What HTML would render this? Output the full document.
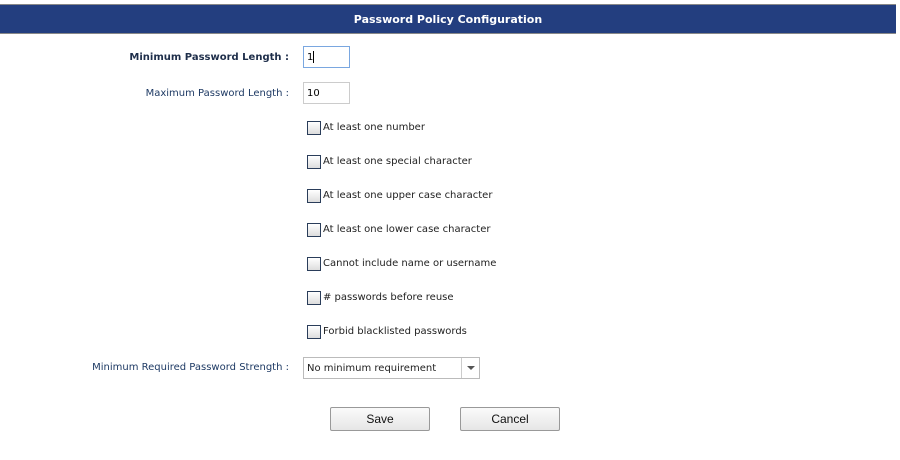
<!DOCTYPE html>
<html><head><style>
body{margin:0;width:900px;height:460px;background:#fff;font-family:"DejaVu Sans","Liberation Sans",sans-serif;position:relative;overflow:hidden}
.hdr{position:absolute;left:0;top:4px;width:896px;height:28px;background:#233e7f;border-top:1px solid #888;border-bottom:1px solid #888;color:#fff;font-weight:bold;font-size:11px;text-align:center;line-height:29px}
.lbl{position:absolute;right:611px;font-size:10px;color:#1e3a64;white-space:nowrap}
.in{position:absolute;left:303px;border:1px solid #ccc;font-size:10px;line-height:20px;padding-left:3px;box-sizing:border-box;width:47px;height:22px}
.cb{position:absolute;left:307px;width:12px;height:12px;border:1px solid #2a3d5a;background:linear-gradient(#fff,#ddd)}
.ct{position:absolute;left:323px;font-size:10px;color:#222;white-space:nowrap}
.btn{position:absolute;top:407px;width:98px;height:22px;border:1px solid #999;border-radius:2px;background:linear-gradient(#fafafa,#e6e6e6);font-family:"Liberation Sans",sans-serif;font-size:12px;text-align:center;line-height:22px;color:#111}
</style></head><body>
<div class="hdr">Password Policy Configuration</div>
<div class="lbl" style="top:52px;font-weight:bold;color:#1e2e4a">Minimum Password Length :</div>
<div class="in" style="top:46px;border:1px solid #7aa7e0;line-height:21px">1<span style="display:inline-block;width:1px;height:12px;background:#000;vertical-align:middle"></span></div>
<div class="lbl" style="top:88px">Maximum Password Length :</div>
<div class="in" style="top:82px;line-height:22px">10</div>
<div class="cb" style="top:121px"></div><div class="ct" style="top:122px">At least one number</div>
<div class="cb" style="top:155px"></div><div class="ct" style="top:156px">At least one special character</div>
<div class="cb" style="top:189px"></div><div class="ct" style="top:190px">At least one upper case character</div>
<div class="cb" style="top:223px"></div><div class="ct" style="top:224px">At least one lower case character</div>
<div class="cb" style="top:257px"></div><div class="ct" style="top:258px">Cannot include name or username</div>
<div class="cb" style="top:291px"></div><div class="ct" style="top:292px">#  passwords before reuse</div>
<div class="cb" style="top:325px"></div><div class="ct" style="top:326px">Forbid blacklisted passwords</div>
<div class="lbl" style="top:362px">Minimum Required Password Strength :</div>
<div style="position:absolute;left:303px;top:357px;width:172px;height:20px;border:1px solid #bbb;font-size:10px;line-height:22px;padding-left:3px;color:#222">No minimum requirement
<div style="position:absolute;left:157px;top:0;width:18px;height:20px;border-left:1px solid #ccc"><div style="position:absolute;left:5px;top:8px;border-left:4px solid transparent;border-right:4px solid transparent;border-top:4px solid #555"></div></div></div>
<div class="btn" style="left:330px">Save</div>
<div class="btn" style="left:460px">Cancel</div>
</body></html>
